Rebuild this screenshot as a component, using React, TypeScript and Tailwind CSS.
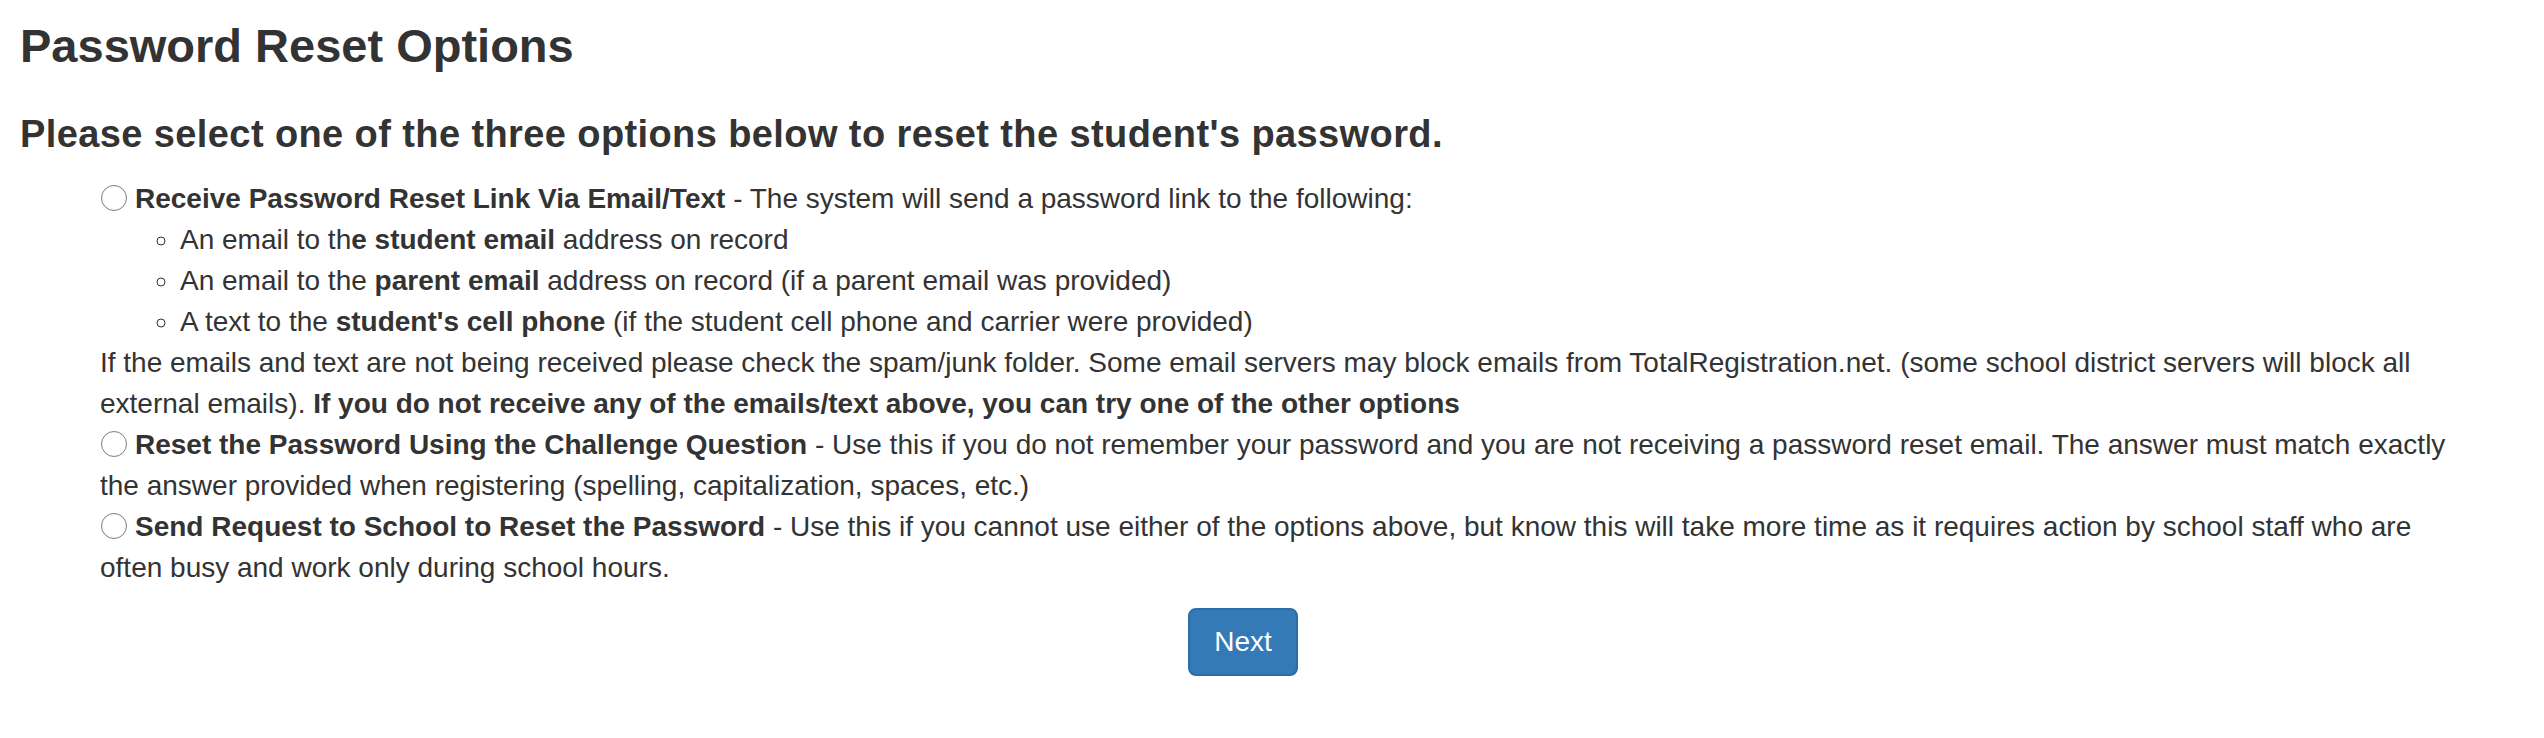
import React from "react";

function Radio() {
  return (
    <span className="inline-block align-top mt-[7px] ml-[1px] mr-[8px] w-[26px] h-[26px] rounded-full border-[1.5px] border-[#7d7d7d] bg-white" />
  );
}

export default function App() {
  return (
    <div
      className="w-[2450px] pl-[20px] text-[#333] bg-white"
      style={{ fontFamily: '"Liberation Sans", Arial, sans-serif' }}
    >
      <h3 className="pt-[20px] text-[47px] leading-[52px] font-bold">
        Password Reset Options
      </h3>
      <h4 className="mt-[42px] mb-[24px] text-[38px] leading-[40px] font-bold tracking-[0.4px]">
        Please select one of the three options below to reset the student's
        password.
      </h4>

      <form className="ml-[80px] text-[28px] leading-[41px]">
        <div>
          <Radio />
          <b>Receive Password Reset Link Via Email/Text</b> - The system will
          send a password link to the following:
          <ul className="list-[circle] pl-[80px]">
            <li>
              An email to th<b>e student email</b> address on record
            </li>
            <li>
              An email to the <b>parent email</b> address on record (if a
              parent email was provided)
            </li>
            <li>
              A text to the <b>student's cell phone</b> (if the student cell
              phone and carrier were provided)
            </li>
          </ul>
          If the emails and text are not being received please check the
          spam/junk folder. Some email servers may block emails from
          TotalRegistration.net. (some school district servers will block all
          external emails).{" "}
          <b>
            If you do not receive any of the emails/text above, you can try one
            of the other options
          </b>
        </div>
        <div>
          <Radio />
          <b>Reset the Password Using the Challenge Question</b> - Use this if
          you do not remember your password and you are not receiving a
          password reset email. The answer must match exactly the answer
          provided when registering (spelling, capitalization, spaces, etc.)
        </div>
        <div>
          <Radio />
          <b>Send Request to School to Reset the Password</b> - Use this if you
          cannot use either of the options above, but know this will take more
          time as it requires action by school staff who are often busy and
          work only during school hours.
        </div>
      </form>

      <div className="flex justify-center mt-[20px] ml-[16px]">
        <button
          type="button"
          className="px-[24px] py-[12px] text-[28px] leading-[40px] text-white bg-[#337ab7] border-2 border-[#2e6da4] rounded-[8px]"
        >
          Next
        </button>
      </div>
    </div>
  );
}
